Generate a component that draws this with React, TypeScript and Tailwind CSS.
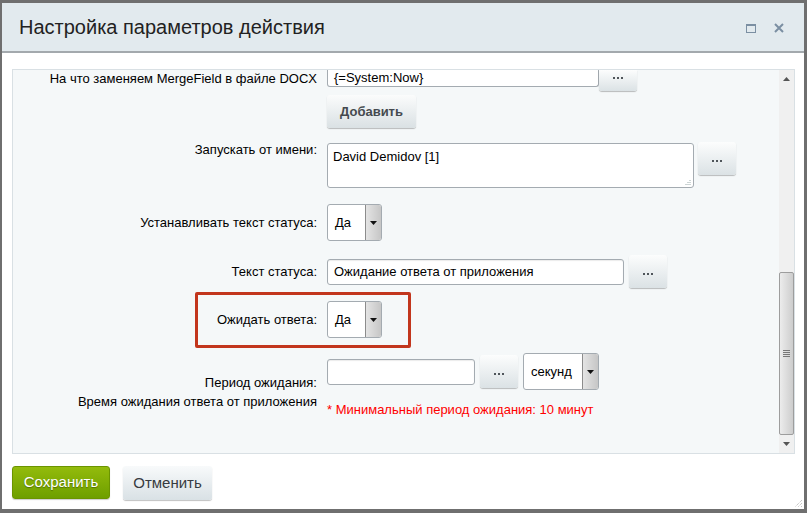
import React from 'react'

/*
  ? small controls
*/

function Dots() {
  return (
    <svg width="10" height="2" viewBox="0 0 10 2">
      <rect x="0" y="0" width="2" height="2" fill="#4f555a" />
      <rect x="4" y="0" width="2" height="2" fill="#4f555a" />
      <rect x="8" y="0" width="2" height="2" fill="#4f555a" />
    </svg>
  )
}

function DotsButton({ className = 'h-[33px] rounded-[3px] pt-[4px]' }: { className?: string }) {
  return (
    <button
      type="button"
      className={`flex w-[38px] shrink-0 items-center justify-center bg-linear-to-b from-[#fcfdfd] to-[#dbe2e5] shadow-[0_1px_1px_rgba(0,0,0,0.25)] ${className}`}
    >
      <Dots />
    </button>
  )
}

function TextInput({ value = '', width }: { value?: string; width: string }) {
  return (
    <div
      className={`flex h-[26px] shrink-0 items-center rounded-[3px] border border-[#a4abb1] bg-white px-[6px] text-[13px] text-black shadow-[inset_0_1px_1px_rgba(0,0,0,0.08)] ${width}`}
    >
      {value}
    </div>
  )
}

function Select({ value, width }: { value: string; width: string }) {
  return (
    <div
      className={`flex h-[37px] shrink-0 rounded-[3px] border border-[#a4abb1] bg-white text-[13px] text-black ${width}`}
    >
      <div className="flex flex-1 items-center pl-[7px]">{value}</div>
      <div className="flex w-[16px] items-center justify-center rounded-r-[2px] border-l border-[#8c8c8c] bg-linear-to-r from-[#e4e4e4] to-[#c6c6c6]">
        <svg width="7" height="4" viewBox="0 0 7 4">
          <path d="M0 0h7L3.5 4z" fill="#111" />
        </svg>
      </div>
    </div>
  )
}

function Label({ children, className = '' }: { children: React.ReactNode; className?: string }) {
  return (
    <div className={`w-[304px] shrink-0 text-right text-[13px] leading-[16px] text-black ${className}`}>
      {children}
    </div>
  )
}

/*
  ? scrollbar
*/

function Scrollbar() {
  return (
    <div className="flex w-[15px] shrink-0 flex-col bg-[#f0f0f0]">
      <div className="flex h-[17px] items-center justify-center">
        <svg width="7" height="4" viewBox="0 0 7 4">
          <path d="M0 4h7L3.5 0z" fill="#555" />
        </svg>
      </div>
      <div className="h-[185px]" />
      <div className="flex h-[163px] items-center justify-center rounded-[2px] border border-[#9d9d9d] bg-linear-to-r from-[#ececec] to-[#cdcdcd]">
        <div className="flex flex-col gap-[1px]">
          <div className="h-px w-[7px] bg-[#777]" />
          <div className="h-px w-[7px] bg-[#777]" />
          <div className="h-px w-[7px] bg-[#777]" />
          <div className="h-px w-[7px] bg-[#777]" />
        </div>
      </div>
      <div className="flex flex-1 items-center justify-center">
        <svg width="7" height="4" viewBox="0 0 7 4">
          <path d="M0 0h7L3.5 4z" fill="#555" />
        </svg>
      </div>
    </div>
  )
}

export default function App() {
  return (
    <div className="h-[513px] w-[807px] overflow-hidden bg-[#6f6f6f] pl-[2px] pt-[3px] font-['Liberation_Sans',Arial,sans-serif]">
      <div className="relative flex h-[506px] w-[802px] flex-col bg-white">
        {/* header */}
        <div className="flex h-[50px] shrink-0 items-center justify-between border-b-2 border-[#a3a9ad] bg-[#e2eaee] pl-[17px] pr-[20px]">
          <div className="text-[20px] leading-none text-[#222]">Настройка параметров действия</div>
          <div className="flex items-center gap-[18px] pt-[2px]">
            <div className="h-[9px] w-[10px] border border-t-2 border-[#7b8fa2]" />
            <svg width="10" height="10" viewBox="0 0 10 10">
              <path d="M1 1l8 8M9 1l-8 8" stroke="#7b8fa2" strokeWidth="2" />
            </svg>
          </div>
        </div>

        {/* panel */}
        <div className="ml-[10px] mt-[16px] flex h-[385px] w-[783px] shrink-0 border border-[#d9e0e4] bg-[#f5f8f9]">
          <div className="flex-1 overflow-hidden">
            <div className="flex flex-col">
              {/* row 1, scrolled partly out of view */}
              <div className="flex h-[21px] gap-[10px]">
                <Label className="pt-[1px] text-[12.7px]">На что заменяем MergeField в файле DOCX</Label>
                <div className="flex items-start">
                  <div className="flex h-[17px] w-[272px] items-center rounded-b-[3px] border border-t-0 border-[#a4abb1] bg-white px-[6px] pb-[1px] text-[13px] leading-[16px]">
                    {'{=System:Now}'}
                  </div>
                  <DotsButton className="h-[21px] items-start rounded-b-[3px] pt-[7px]" />
                </div>
              </div>

              {/* add */}
              <div className="mt-[4px] flex gap-[10px]">
                <Label>{''}</Label>
                <button
                  type="button"
                  className="h-[33px] w-[89px] rounded-[3px] bg-linear-to-b from-[#fbfcfc] to-[#dae1e4] text-[13px] font-bold text-[#454a4f] shadow-[0_1px_1px_rgba(0,0,0,0.25)]"
                >
                  Добавить
                </button>
              </div>

              {/* run as */}
              <div className="mt-[14px] flex gap-[10px]">
                <Label>Запускать от имени:</Label>
                <div className="flex gap-[4px]">
                  <div className="relative mt-[1px] h-[45px] w-[367px] rounded-[3px] border border-[#a4abb1] bg-white px-[5px] pt-[5px] text-[13px] leading-[16px]">
                    David Demidov [1]
                    <svg className="absolute bottom-[2px] right-[2px]" width="6" height="6" viewBox="0 0 6 6">
                      <path d="M5 1v1M3 3v1M5 3v1M1 5v1M3 5v1M5 5v1" stroke="#9aa" strokeWidth="1" />
                    </svg>
                  </div>
                  <DotsButton />
                </div>
              </div>

              {/* set status text */}
              <div className="mt-[16px] flex items-center gap-[10px]">
                <Label>Устанавливать текст статуса:</Label>
                <Select value="Да" width="w-[55px]" />
              </div>

              {/* status text */}
              <div className="mt-[14px] flex items-center gap-[10px]">
                <Label>Текст статуса:</Label>
                <div className="flex items-center gap-[5px]">
                  <TextInput value="Ожидание ответа от приложения" width="w-[297px]" />
                  <DotsButton />
                </div>
              </div>

              {/* wait for answer */}
              <div className="relative mt-[4px] flex h-[56px] items-center gap-[10px] pb-px">
                <Label>Ожидать ответа:</Label>
                <Select value="Да" width="w-[55px]" />
                <div className="absolute inset-y-0 left-[182px] w-[216px] rounded-[2px] border-[3px] border-[#c2361d]" />
              </div>

              {/* period */}
              <div className="mt-[5px] flex gap-[10px]">
                <Label className="pt-[20px] leading-[19px]">
                  Период ожидания:
                  <br />
                  Время ожидания ответа от приложения
                </Label>
                <div className="flex flex-col">
                  <div className="flex items-center gap-[5px]">
                    <TextInput width="w-[148px]" />
                    <DotsButton />
                    <Select value="секунд" width="w-[76px]" />
                  </div>
                  <div className="mt-[12px] text-[13px] leading-[16px] text-[#ff0000]">
                    * Минимальный период ожидания: 10 минут
                  </div>
                </div>
              </div>
            </div>
          </div>
          <Scrollbar />
        </div>

        {/* footer */}
        <div className="ml-[10px] mt-[12px] flex gap-[13px]">
          <button
            type="button"
            className="h-[33px] w-[98px] rounded-[3px] border border-[#6b9400] bg-linear-to-b from-[#93bb0c] to-[#6e9f00] text-[15px] text-white [text-shadow:0_1px_1px_rgba(0,0,0,0.35)] shadow-[0_1px_1px_rgba(0,0,0,0.2)]"
          >
            Сохранить
          </button>
          <button
            type="button"
            className="h-[34px] w-[89px] rounded-[3px] bg-linear-to-b from-[#f8fafb] to-[#d9e1e5] text-[15px] text-[#363b40] shadow-[0_1px_1px_rgba(0,0,0,0.25)]"
          >
            Отменить
          </button>
        </div>

        {/* resize grip */}
        <svg className="absolute bottom-[1px] right-[1px]" width="9" height="9" viewBox="0 0 9 9">
          <path d="M8 1L1 8M8 4L4 8M8 7L7 8" stroke="#b0b0b0" strokeWidth="1" strokeDasharray="1 1" />
        </svg>
      </div>
    </div>
  )
}
